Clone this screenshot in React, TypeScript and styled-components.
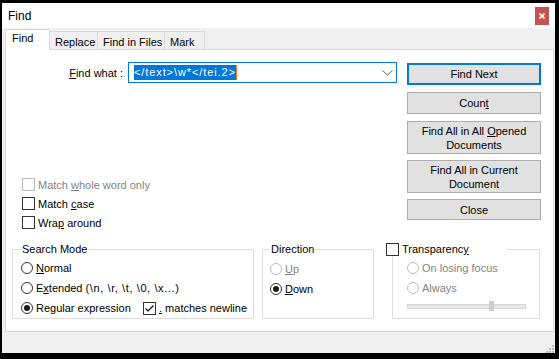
import React from 'react';
import styled, { createGlobalStyle } from 'styled-components';

const GlobalStyle = createGlobalStyle`
  html, body {
    margin: 0;
    padding: 0;
    background: #000;
  }
  body {
    font-family: "Liberation Sans", Arial, sans-serif;
    font-size: 11px;
    color: #000;
  }
  #root {
    width: 559px;
    height: 359px;
    overflow: hidden;
  }
`;

const Window = styled.div`
  width: 553px;
  height: 350px;
  margin: 3px 0 0 2px;
  display: flex;
  flex-direction: column;
  background: #f0f0f0;
`;

const TitleBar = styled.div`
  flex: none;
  height: 25px;
  box-sizing: border-box;
  padding: 0 6px;
  background: #fff;
  display: flex;
  align-items: center;
  justify-content: space-between;
`;

const Title = styled.span`
  font-size: 12px;
`;

const CloseBox = styled.div`
  width: 14px;
  height: 18px;
  margin-top: 1px;
  background: #c75050;
  display: flex;
  align-items: center;
  justify-content: center;
`;

const Client = styled.div`
  flex: 1;
  display: flex;
  flex-direction: column;
  padding: 1px 1px 0 3px;
`;

const TabStrip = styled.div`
  height: 20px;
  display: flex;
  align-items: flex-end;
`;

const Tab = styled.div<{ $active?: boolean; $width: number }>`
  position: relative;
  box-sizing: border-box;
  width: ${p => p.$width}px;
  height: ${p => (p.$active ? 21 : 18)}px;
  margin-left: ${p => (p.$active ? 0 : -1)}px;
  margin-bottom: ${p => (p.$active ? -1 : 0)}px;
  padding: ${p => (p.$active ? '1px 0 0 6px' : '2px 0 0 5px')};
  line-height: ${p => (p.$active ? 15 : 16)}px;
  border: 1px solid #d9d9d9;
  border-bottom: none;
  background: ${p => (p.$active ? '#fff' : '#f0f0f0')};
  z-index: ${p => (p.$active ? 1 : 0)};
  white-space: nowrap;
`;

const Panel = styled.div`
  flex: none;
  height: 283px;
  box-sizing: border-box;
  border: 1px solid #d9d9d9;
  background: #fff;
  display: flex;
  flex-direction: column;
`;

const TopSection = styled.div`
  display: flex;
  padding-top: 12px;
`;

const LeftColumn = styled.div`
  width: 401px;
  display: flex;
  flex-direction: column;
`;

const FindRow = styled.div`
  height: 21px;
  display: flex;
  align-items: center;
`;

const FieldLabel = styled.label`
  width: 117px;
  margin-right: 5px;
  text-align: right;
  white-space: nowrap;
`;

const Combo = styled.div`
  box-sizing: border-box;
  width: 269px;
  height: 21px;
  border: 1px solid #0078d7;
  background: #fff;
  display: flex;
  align-items: center;
  padding-left: 5px;
`;

const Selection = styled.span`
  background: #0078d7;
  color: #fff;
  line-height: 15px;
  letter-spacing: 0.9px;
  white-space: nowrap;
`;

const Caret = styled.span`
  width: 1px;
  height: 15px;
  background: #f47b2f;
`;

const Chevron = styled.svg`
  margin-left: auto;
  margin-right: 3px;
`;

const CheckList = styled.div`
  margin-top: 92px;
  padding-left: 16px;
  display: flex;
  flex-direction: column;
`;

const CheckRow = styled.div<{ $disabled?: boolean }>`
  height: 19px;
  display: flex;
  align-items: center;
  white-space: nowrap;
  color: ${p => (p.$disabled ? '#838383' : '#000')};
`;

const Box = styled.span<{ $disabled?: boolean }>`
  box-sizing: border-box;
  flex: none;
  width: 13px;
  height: 13px;
  margin-right: 3px;
  border: 1px solid ${p => (p.$disabled ? '#bcbcbc' : '#333')};
  background: #fff;
  display: flex;
  align-items: center;
  justify-content: center;
`;

const Caption = styled.span<{ $spacing?: number }>`
  white-space: pre;
  letter-spacing: ${p => p.$spacing ?? 0}px;
`;

const ButtonColumn = styled.div`
  display: flex;
  flex-direction: column;
`;

const Button = styled.button<{ $h: number; $mt: number; $default?: boolean }>`
  box-sizing: border-box;
  width: 134px;
  height: ${p => p.$h}px;
  margin: ${p => p.$mt}px 0 0;
  padding: 0;
  background: #e1e1e1;
  border: ${p => (p.$default ? '2px solid #0078d7' : '1px solid #adadad')};
  font: inherit;
  line-height: 14px;
  color: #000;
`;

const Key = styled.span`
  text-decoration: underline;
  text-underline-offset: 1px;
`;

const BottomSection = styled.div`
  display: flex;
  margin-top: 10px;
  padding-left: 6px;
`;

const Group = styled.fieldset<{ $width: number; $ml: number; $pl: number; $pt?: number }>`
  box-sizing: border-box;
  width: ${p => p.$width}px;
  height: 77px;
  margin: 0 0 0 ${p => p.$ml}px;
  padding: ${p => p.$pt ?? 2}px 0 0 ${p => p.$pl}px;
  border: 1px solid #dcdcdc;
  min-width: 0;
`;

const Legend = styled.legend<{ $ml?: number; $width?: number }>`
  padding: 0 1px;
  margin-left: ${p => p.$ml ?? 0}px;
  width: ${p => (p.$width ? `${p.$width}px` : 'auto')};
  line-height: 14px;
  height: 14px;
  display: flex;
  align-items: center;
  white-space: nowrap;
`;

const RadioRow = styled.div<{ $disabled?: boolean }>`
  height: 20px;
  display: flex;
  align-items: center;
  white-space: nowrap;
  color: ${p => (p.$disabled ? '#838383' : '#000')};
`;

const RadioLabel = styled.span<{ $width?: number }>`
  display: flex;
  align-items: center;
  width: ${p => (p.$width ? `${p.$width}px` : 'auto')};
`;

const Circle = styled.span<{ $disabled?: boolean }>`
  box-sizing: border-box;
  flex: none;
  width: 12px;
  height: 12px;
  margin-right: 3px;
  border-radius: 50%;
  border: 1px solid ${p => (p.$disabled ? '#bcbcbc' : '#333')};
  background: #fff;
  display: flex;
  align-items: center;
  justify-content: center;
`;

const Dot = styled.span`
  width: 6px;
  height: 6px;
  border-radius: 50%;
  background: #1a1a1a;
`;

const SliderRow = styled.div`
  position: relative;
  width: 119px;
  height: 10px;
  margin-top: 3px;
  display: flex;
  align-items: center;
`;

const Track = styled.div`
  box-sizing: border-box;
  width: 100%;
  height: 5px;
  background: #e7e7e7;
  border: 1px solid #d6d6d6;
`;

const Thumb = styled.div`
  position: absolute;
  top: 0;
  width: 5px;
  height: 10px;
  background: #cdcdcd;
`;

const StatusBar = styled.div`
  flex: 1;
  display: flex;
  justify-content: flex-end;
  align-items: flex-end;
`;

const Check: React.FC<{ checked?: boolean; disabled?: boolean; children: React.ReactNode }> = ({
  checked,
  disabled,
  children,
}) => (
  <CheckRow $disabled={disabled}>
    <Box $disabled={disabled}>
      {checked && (
        <svg width="11" height="11" viewBox="0 0 11 11">
          <path d="M1.5 5.5 L4 8 L9.5 2.5" fill="none" stroke="#000" strokeWidth="1.1" />
        </svg>
      )}
    </Box>
    <Caption>{children}</Caption>
  </CheckRow>
);

const Radio: React.FC<{ checked?: boolean; disabled?: boolean; width?: number; children: React.ReactNode }> = ({
  checked,
  disabled,
  width,
  children,
}) => (
  <RadioLabel $width={width}>
    <Circle $disabled={disabled}>{checked && <Dot />}</Circle>
    <Caption>{children}</Caption>
  </RadioLabel>
);

export default function App() {
  return (
    <>
      <GlobalStyle />
      <Window>
        <TitleBar>
          <Title>Find</Title>
          <CloseBox>
            <svg width="6" height="6" viewBox="0 0 6 6">
              <path d="M0.5 0.5 L5.5 5.5 M5.5 0.5 L0.5 5.5" stroke="#fff" strokeWidth="1.6" />
            </svg>
          </CloseBox>
        </TitleBar>
        <Client>
          <TabStrip>
            <Tab $active $width={45}>Find</Tab>
            <Tab $width={49}>Replace</Tab>
            <Tab $width={68}>Find in Files</Tab>
            <Tab $width={41}>Mark</Tab>
          </TabStrip>
          <Panel>
            <TopSection>
              <LeftColumn>
                <FindRow>
                  <FieldLabel>
                    <Key>F</Key>ind what :
                  </FieldLabel>
                  <Combo>
                    <Selection>{'</text>\\w*</tei.2>'}</Selection>
                    <Caret />
                    <Chevron width="11" height="6" viewBox="0 0 11 6">
                      <path d="M0.5 0.5 L5.5 5 L10.5 0.5" fill="none" stroke="#606060" strokeWidth="1" />
                    </Chevron>
                  </Combo>
                </FindRow>
                <CheckList>
                  <Check disabled>
                    Match <Key>w</Key>hole word only
                  </Check>
                  <Check>
                    Match <Key>c</Key>ase
                  </Check>
                  <Check>
                    Wra<Key>p</Key> around
                  </Check>
                </CheckList>
              </LeftColumn>
              <ButtonColumn>
                <Button $default $h={22} $mt={1}>Find Next</Button>
                <Button $h={22} $mt={7}>
                  Coun<Key>t</Key>
                </Button>
                <Button $h={33} $mt={7}>
                  Find All in All <Key>O</Key>pened
                  <br />
                  Documents
                </Button>
                <Button $h={33} $mt={6}>
                  Find All in Current
                  <br />
                  Document
                </Button>
                <Button $h={21} $mt={6}>Close</Button>
              </ButtonColumn>
            </TopSection>
            <BottomSection>
              <Group $width={242} $ml={0} $pl={8}>
                <Legend>Search Mode</Legend>
                <RadioRow>
                  <Radio>
                    <Key>N</Key>ormal
                  </Radio>
                </RadioRow>
                <RadioRow>
                  <Radio>
                    E<Key>x</Key>tended <Caption $spacing={0.6}>{'(\\n, \\r, \\t, \\0, \\x...)'}</Caption>
                  </Radio>
                </RadioRow>
                <RadioRow>
                  <Radio checked width={122}>
                    Re<Key>g</Key>ular expression
                  </Radio>
                  <Check checked>
                    <Key>.</Key> matches newline
                  </Check>
                </RadioRow>
              </Group>
              <Group $width={112} $ml={8} $pl={7} $pt={3}>
                <Legend>Direction</Legend>
                <RadioRow $disabled>
                  <Radio disabled>
                    <Key>U</Key>p
                  </Radio>
                </RadioRow>
                <RadioRow>
                  <Radio checked>
                    <Key>D</Key>own
                  </Radio>
                </RadioRow>
              </Group>
              <Group $width={148} $ml={18} $pl={14} $pt={2}>
                <Legend $ml={-22} $width={120}>
                  <Check>
                    Transparenc<Key>y</Key>
                  </Check>
                </Legend>
                <RadioRow $disabled>
                  <Radio disabled>On losing focus</Radio>
                </RadioRow>
                <RadioRow $disabled>
                  <Radio disabled>Always</Radio>
                </RadioRow>
                <SliderRow>
                  <Track />
                  <Thumb style={{ left: 82 }} />
                </SliderRow>
              </Group>
            </BottomSection>
          </Panel>
          <StatusBar>
            <svg width="8" height="8" viewBox="0 0 8 8">
              <g fill="#b9b9b9">
                <rect x="6" y="0" width="2" height="2" />
                <rect x="3" y="3" width="2" height="2" />
                <rect x="6" y="3" width="2" height="2" />
                <rect x="0" y="6" width="2" height="2" />
                <rect x="3" y="6" width="2" height="2" />
                <rect x="6" y="6" width="2" height="2" />
              </g>
            </svg>
          </StatusBar>
        </Client>
      </Window>
    </>
  );
}
